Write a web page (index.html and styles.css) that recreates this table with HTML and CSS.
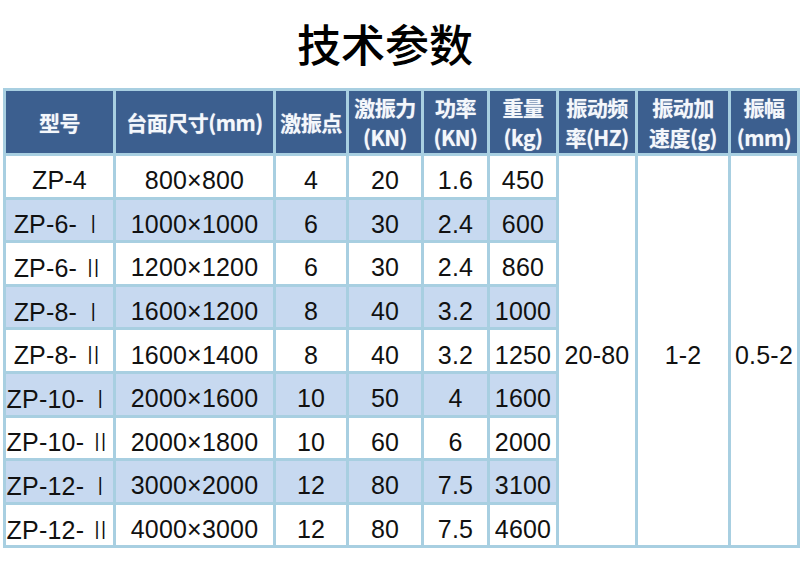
FILE: index.html
```html
<!DOCTYPE html>
<html lang="zh">
<head>
<meta charset="utf-8">
<title>技术参数</title>
<link rel="stylesheet" href="styles.css">
</head>
<body>
<h1 class="title">技术参数</h1>
<table class="spec">
  <colgroup>
    <col class="c1"><col class="c2"><col class="c3"><col class="c4"><col class="c5"><col class="c6"><col class="c7"><col class="c8"><col class="c9">
  </colgroup>
  <thead>
    <tr>
      <th>型号</th>
      <th>台面尺寸(mm)</th>
      <th>激振点</th>
      <th>激振力<br>(KN)</th>
      <th>功率<br>(KN)</th>
      <th>重量<br>(kg)</th>
      <th>振动频<br>率(HZ)</th>
      <th>振动加<br>速度(g)</th>
      <th>振幅<br>(mm)</th>
    </tr>
  </thead>
  <tbody>
    <tr>
      <td>ZP-4</td><td>800×800</td><td>4</td><td>20</td><td>1.6</td><td>450</td>
      <td class="merged" rowspan="9">20-80</td>
      <td class="merged" rowspan="9">1-2</td>
      <td class="merged" rowspan="9">0.5-2</td>
    </tr>
    <tr class="alt"><td>ZP-6-<span class="rn">Ⅰ</span></td><td>1000×1000</td><td>6</td><td>30</td><td>2.4</td><td>600</td></tr>
    <tr><td>ZP-6-<span class="rn">Ⅱ</span></td><td>1200×1200</td><td>6</td><td>30</td><td>2.4</td><td>860</td></tr>
    <tr class="alt"><td>ZP-8-<span class="rn">Ⅰ</span></td><td>1600×1200</td><td>8</td><td>40</td><td>3.2</td><td>1000</td></tr>
    <tr><td>ZP-8-<span class="rn">Ⅱ</span></td><td>1600×1400</td><td>8</td><td>40</td><td>3.2</td><td>1250</td></tr>
    <tr class="alt"><td>ZP-10-<span class="rn">Ⅰ</span></td><td>2000×1600</td><td>10</td><td>50</td><td>4</td><td>1600</td></tr>
    <tr><td>ZP-10-<span class="rn">Ⅱ</span></td><td>2000×1800</td><td>10</td><td>60</td><td>6</td><td>2000</td></tr>
    <tr class="alt"><td>ZP-12-<span class="rn">Ⅰ</span></td><td>3000×2000</td><td>12</td><td>80</td><td>7.5</td><td>3100</td></tr>
    <tr><td>ZP-12-<span class="rn">Ⅱ</span></td><td>4000×3000</td><td>12</td><td>80</td><td>7.5</td><td>4600</td></tr>
  </tbody>
</table>
</body>
</html>
```
FILE: styles.css
```css
html, body {
  margin: 0;
  padding: 0;
  background: #ffffff;
}
body {
  width: 800px;
  height: 561px;
  overflow: hidden;
  font-family: "Liberation Sans", "Noto Sans CJK SC", sans-serif;
  color: #111111;
}
.title {
  margin: 13px 0 0 0;
  padding-right: 30px;
  height: 60px;
  line-height: 60px;
  text-align: center;
  font-family: "Noto Sans CJK SC", sans-serif;
  font-weight: 500;
  font-size: 44px;
  color: #000000;
}
.spec {
  margin: 15px 0 0 3px;
  width: 794px;
  table-layout: fixed;
  border-collapse: collapse;
  border: 3px solid #98c3d8;
}
.c1 { width: 110px; }
.c2 { width: 160px; }
.c3 { width: 73px; }
.c4 { width: 75px; }
.c5 { width: 66px; }
.c6 { width: 69px; }
.c7 { width: 79px; }
.c8 { width: 93px; }
.c9 { width: 69px; }
.spec th,
.spec td {
  border: 3px solid #a8cfe1;
  padding: 0;
  text-align: center;
  vertical-align: middle;
  white-space: nowrap;
}
.spec th {
  height: 62px;
  background: #3c5f8f;
  color: #f4f7fb;
  font-family: "Noto Sans CJK SC", sans-serif;
  font-weight: 700;
  font-size: 21px;
  line-height: 30px;
  letter-spacing: -0.5px;
  text-shadow: 0 0 1px rgba(255,255,255,0.6);
}
.spec td {
  height: 32.6px;
  font-size: 25px;
  line-height: 28px;
  padding-top: 8px;
  letter-spacing: 0.2px;
  background: #ffffff;
}
.spec tr.alt td {
  background: #c7d9f0;
}
.spec td.merged {
  background: #ffffff;
}
.rn {
  font-family: "Noto Sans CJK SC", sans-serif;
  font-weight: 300;
  font-size: 24px;
  margin-left: 4px;
}
```
